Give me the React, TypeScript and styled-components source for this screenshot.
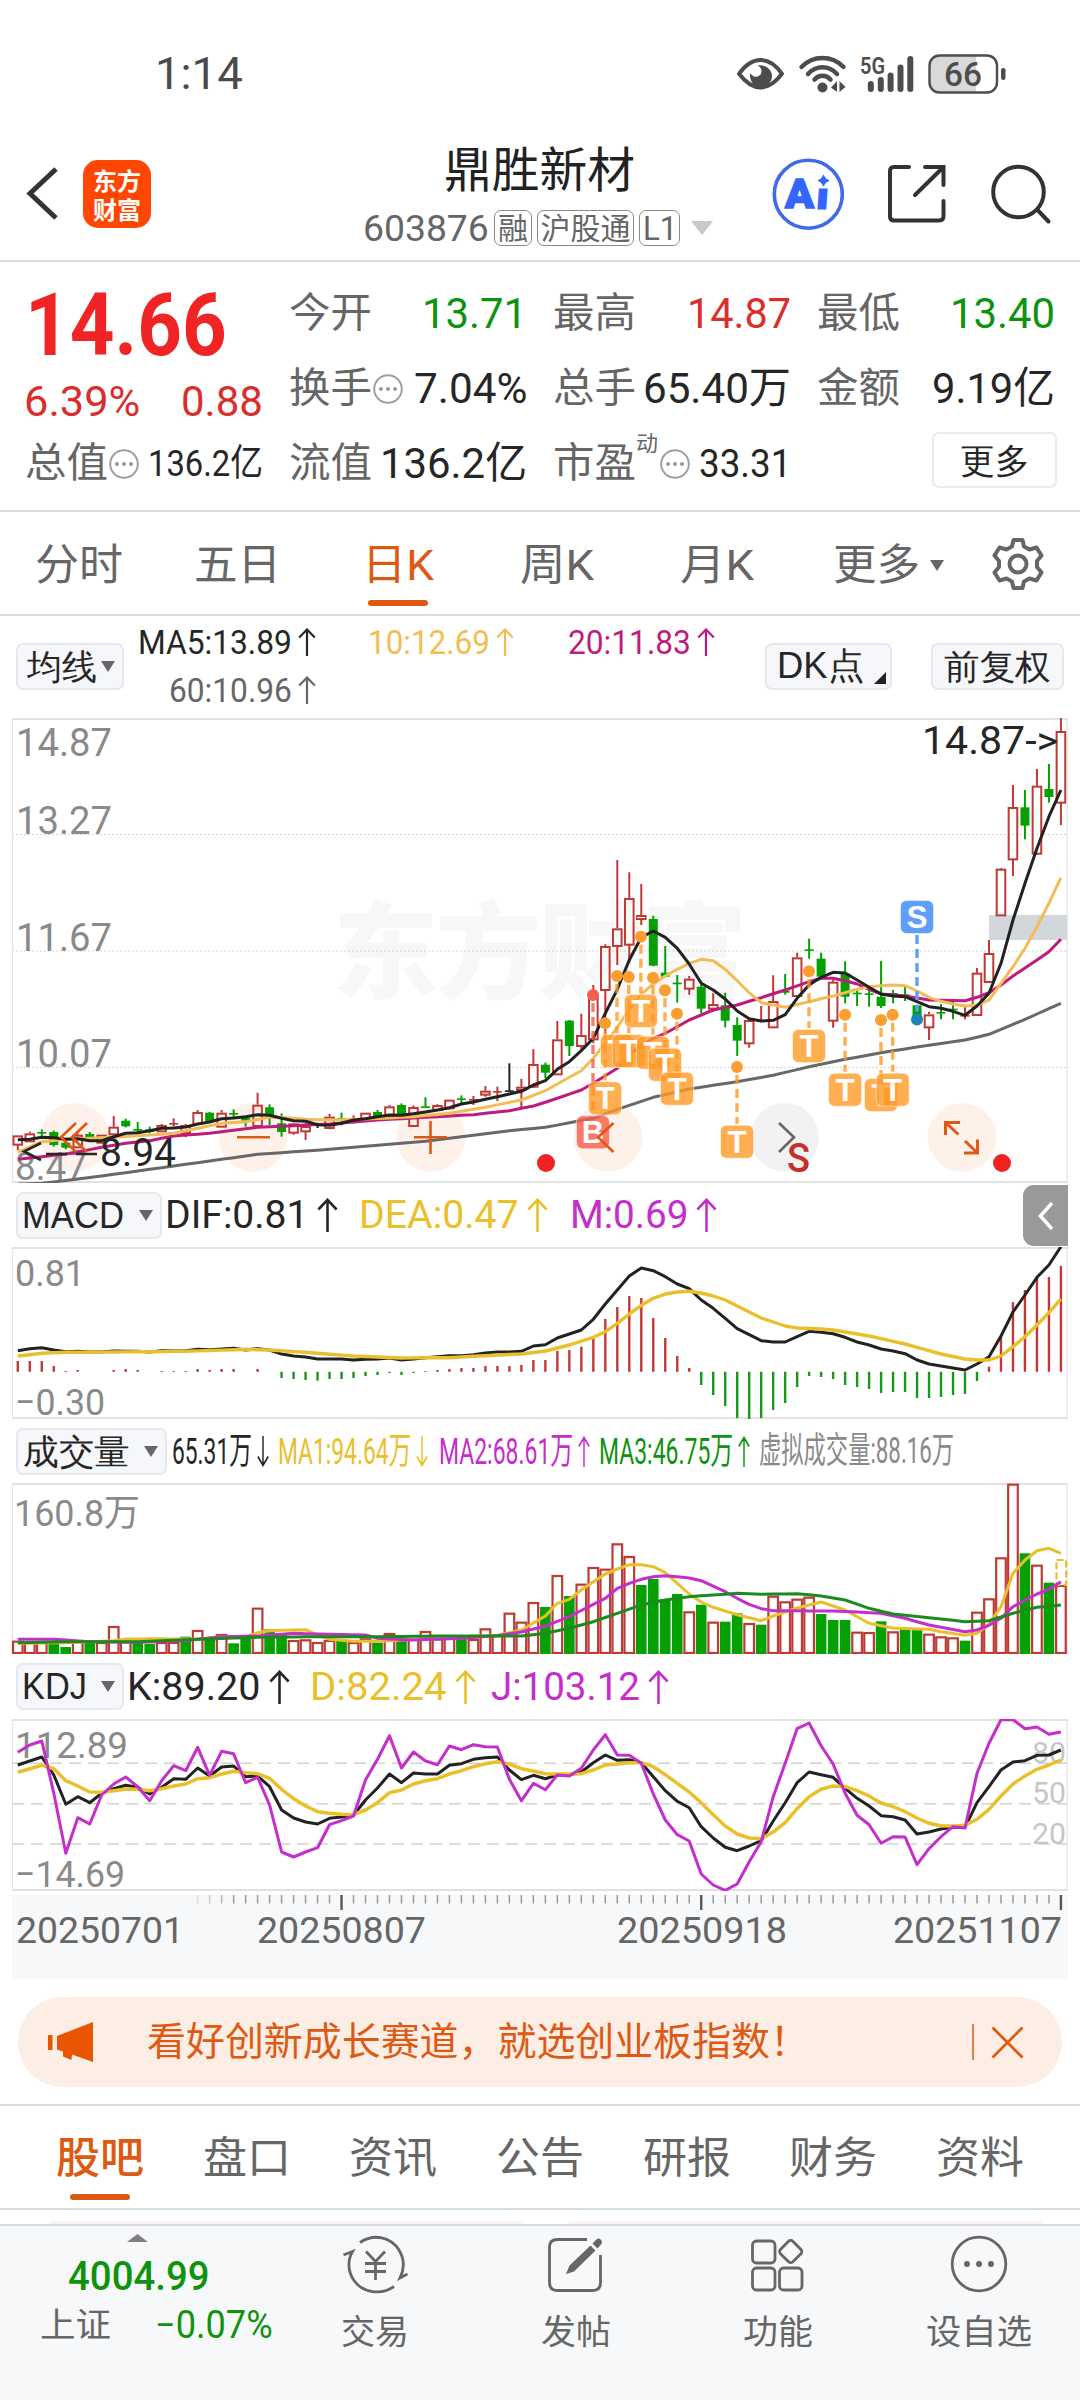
import React, { useLayoutEffect, useRef, useState } from "react";
import styled, { createGlobalStyle } from "styled-components";

const FONT = `Roboto, "Noto Sans CJK SC", sans-serif`;
const C = {
  ink: "#262626",
  grey: "#666666",
  light: "#8a8a8a",
  red: "#d82f2c",
  candle: "#bd3a36",
  green: "#0f930f",
  bar: "#04a004",
  orange: "#dc5a14",
  yellow: "#e9c02c",
  amber: "#f2bd55",
  magenta: "#bf1b7d",
  purple: "#c42fcb",
  line: "#dcdcdc",
};

const Global = createGlobalStyle`
  * { box-sizing: border-box; }
  html, body { margin: 0; padding: 0; background: #fff; }
  body { width: 1080px; font-family: ${FONT}; overflow-x: hidden; }
  svg { display: block; flex: none; }
`;

/* ---------- text that is condensed or widened to a fixed measure ---------- */

const FitBox = styled.span<{ $w: number; $size: number; $color: string; $weight: number; $ml: number }>`
  display: block;
  flex: none;
  width: ${(p) => p.$w}px;
  height: ${(p) => Math.round(p.$size * 1.1)}px;
  line-height: ${(p) => Math.round(p.$size * 1.1)}px;
  margin-left: ${(p) => p.$ml}px;
  font-size: ${(p) => p.$size}px;
  font-weight: ${(p) => p.$weight};
  color: ${(p) => p.$color};
  white-space: nowrap;
`;
const FitInner = styled.span`
  display: inline-block;
  transform-origin: 0 50%;
  white-space: pre;
`;

type FitProps = { w: number; size: number; color?: string; weight?: number; ml?: number; children: string };
function Fit({ w, size, color = C.ink, weight = 400, ml = 0, children }: FitProps) {
  const ref = useRef<HTMLSpanElement>(null);
  const [scale, setScale] = useState(1);
  useLayoutEffect(() => {
    if (ref.current) setScale(w / ref.current.offsetWidth);
  }, [w, size, children]);
  return (
    <FitBox $w={w} $size={size} $color={color} $weight={weight} $ml={ml}>
      <FitInner ref={ref} style={{ transform: `scaleX(${scale})` }}>{children}</FitInner>
    </FitBox>
  );
}

/* ---------- layout parts ---------- */

const Page = styled.div`
  width: 1080px;
  height: 2400px;
  display: flex;
  flex-direction: column;
  background: #fff;
  overflow: hidden;
`;
const Row = styled.div<{ $gap?: number; $ml?: number; $mr?: number; $mt?: number }>`
  display: flex;
  align-items: center;
  gap: ${(p) => p.$gap ?? 0}px;
  margin: ${(p) => p.$mt ?? 0}px ${(p) => p.$mr ?? 0}px 0 ${(p) => p.$ml ?? 0}px;
`;
const StatusBar = styled.div`
  flex: none;
  height: 127px;
  padding: 20px 74px 0 155px;
  display: flex;
  align-items: center;
  justify-content: space-between;
`;
const Header = styled.header`
  flex: none;
  height: 135px;
  border-bottom: 2px solid ${C.line};
  display: grid;
  grid-template-columns: 151px 1fr 308px;
  align-items: center;
`;
const HeaderLeft = styled.div`
  display: flex;
  align-items: center;
  gap: 24px;
  padding-left: 26px;
  padding-top: 1px;
`;
const Logo = styled.div`
  width: 68px;
  height: 68px;
  border-radius: 15px;
  background: #ff4602;
  color: #fff;
  font: 700 24px/29px "Noto Sans CJK SC", sans-serif;
  display: flex;
  flex-direction: column;
  align-items: center;
  justify-content: center;
`;
const TitleBlock = styled.div`
  display: flex;
  flex-direction: column;
  padding-top: 3px;
  gap: 13px;
`;
const TitleLine = styled.div`
  height: 53px;
  padding-left: 293px;
`;
const CodeLine = styled.div`
  height: 36px;
  padding-left: 212px;
  display: flex;
  align-items: center;
`;
const Tag = styled.span<{ $w: number; $ml: number }>`
  flex: none;
  width: ${(p) => p.$w}px;
  height: 36px;
  margin-left: ${(p) => p.$ml}px;
  border: 1.5px solid #8a8a8a;
  border-radius: 7px;
  display: flex;
  align-items: center;
  justify-content: center;
`;
const HeaderRight = styled.div`
  display: flex;
  align-items: center;
`;

const Quote = styled.section`
  flex: none;
  height: 250px;
  padding: 13px 25px 0;
  border-bottom: 2px solid ${C.line};
  display: grid;
  grid-template-columns: repeat(4, 238px);
  column-gap: 26px;
  align-content: start;
`;
const QuoteCol = styled.div`
  display: flex;
  flex-direction: column;
`;
const Cell = styled.div<{ $h?: number; $pt?: number }>`
  height: ${(p) => p.$h ?? 75}px;
  padding-top: ${(p) => p.$pt ?? 2}px;
  display: flex;
  align-items: center;
  justify-content: space-between;
`;
const MoreButton = styled.button`
  width: 125px;
  height: 56px;
  margin: -7px -2px 0 auto;
  padding: 0;
  border: 2px solid #ebebeb;
  border-radius: 7px;
  background: #fff;
  display: flex;
  align-items: center;
  justify-content: center;
`;
const Sup = styled.span`
  align-self: flex-start;
  margin: -9px 2px 0 0;
`;

const PeriodTabs = styled.nav`
  flex: none;
  height: 104px;
  border-bottom: 2px solid ${C.line};
  display: grid;
  grid-template-columns: 158px 158px 163px 156px 163px 182px 1fr;
`;
const PeriodTab = styled.div<{ $active?: boolean; $pt?: number; $pr?: number }>`
  display: flex;
  align-items: center;
  justify-content: center;
  gap: 10px;
  padding-top: ${(p) => p.$pt ?? 4}px;
  padding-right: ${(p) => p.$pr ?? 0}px;
  position: relative;
  &::after {
    content: "";
    display: ${(p) => (p.$active ? "block" : "none")};
    position: absolute;
    bottom: 8px;
    width: 60px;
    height: 6px;
    border-radius: 3px;
    background: ${C.orange};
  }
`;

const Legend = styled.div<{ $h: number; $pt?: number; $pb?: number }>`
  flex: none;
  height: ${(p) => p.$h}px;
  padding: ${(p) => p.$pt ?? 0}px 0 ${(p) => p.$pb ?? 0}px 16px;
  display: flex;
  align-items: center;
  position: relative;
`;
const Chip = styled.button<{ $w: number; $ml?: number; $pl?: number; $pr?: number }>`
  flex: none;
  width: ${(p) => p.$w}px;
  height: 47px;
  margin: 0 0 0 ${(p) => p.$ml ?? 0}px;
  padding: 0 ${(p) => p.$pr ?? 7}px 0 ${(p) => p.$pl ?? 9}px;
  border: 2px solid #e6e8ec;
  border-radius: 7px;
  background: #f6f7fa;
  display: flex;
  align-items: center;
  justify-content: space-between;
`;
const Corner = styled.span`
  align-self: flex-end;
  margin-bottom: 4px;
`;
const MaGrid = styled.div`
  display: grid;
  grid-template-columns: 192px 198px 201px;
  grid-auto-rows: 48px;
  align-items: center;
  justify-items: end;
`;
const SideHandle = styled.div`
  position: absolute;
  right: 12px;
  top: 2px;
  width: 45px;
  height: 61px;
  border-radius: 11px 0 0 11px;
  background: #999;
  display: flex;
  align-items: center;
  justify-content: center;
`;

const Axis = styled.div`
  flex: none;
  height: 84px;
  margin: 4px 12px 0;
  background: #f7f8fa;
`;
const Banner = styled.div`
  flex: none;
  height: 90px;
  margin: 18px 18px 17px;
  padding: 0 16px 0 30px;
  border-radius: 45px;
  background: #fceee5;
  display: flex;
  align-items: center;
`;
const Divider = styled.span`
  width: 2px;
  height: 36px;
  margin-left: auto;
  margin-right: 17px;
  background: ${C.orange};
  opacity: 0.75;
`;
const SectionTabs = styled.nav`
  flex: none;
  height: 106px;
  padding: 0 27px;
  border-top: 2px solid ${C.line};
  border-bottom: 2px solid ${C.line};
  display: grid;
  grid-template-columns: repeat(7, 1fr);
`;
const Strips = styled.div`
  flex: none;
  height: 14px;
  padding: 11px 38px 0 50px;
  display: flex;
  justify-content: space-between;
`;
const Strip = styled.span`
  width: 474px;
  height: 3px;
  border-radius: 3px 3px 0 0;
  background: #fdf3ef;
`;
const BottomNav = styled.footer`
  flex: none;
  height: 176px;
  border-top: 2px solid #d8dbe2;
  background: #f7f8fa;
  display: grid;
  grid-template-columns: 275px 200px 202px 201px 202px;
`;
const IndexBox = styled.div`
  padding: 8px 0 0 40px;
  display: flex;
  flex-direction: column;
`;
const NavItem = styled.div`
  display: flex;
  flex-direction: column;
  align-items: center;
  padding-top: 8px;
  gap: 20px;
`;

/* ---------- icons ---------- */

const Tri = ({ w = 14, h = 11, color = C.grey, up = false }: { w?: number; h?: number; color?: string; up?: boolean }) => (
  <svg width={w} height={h} viewBox="0 0 14 11" preserveAspectRatio="none">
    <path d={up ? "M0 11H14L7 0Z" : "M0 0H14L7 11Z"} fill={color} />
  </svg>
);
const ArrowSvg = styled.svg<{ $ml: number }>`
  margin-left: ${(p) => p.$ml}px;
`;
const Arrow = ({ color, down = false, w = 18, h = 28, ml = 7 }: { color: string; down?: boolean; w?: number; h?: number; ml?: number }) => (
  <ArrowSvg $ml={ml} width={w} height={h} viewBox="0 0 18 28" preserveAspectRatio="none">
    <path
      d={down ? "M9 0V26.5M1.2 18.5L9 26.5L16.8 18.5" : "M9 28V1.5M1.2 9.5L9 1.5L16.8 9.5"}
      fill="none" stroke={color} strokeWidth="2.2"
    />
  </ArrowSvg>
);
const Dots = () => (
  <svg width="30" height="30" viewBox="0 0 30 30">
    <circle cx="15" cy="15" r="13.800" fill="none" stroke="#a0a0a0" strokeWidth="2" />
    <g fill="#999"><circle cx="8" cy="15" r="2" /><circle cx="15" cy="15" r="2" /><circle cx="22" cy="15" r="2" /></g>
  </svg>
);

const StatusIcons = () => (
  <svg width="271" height="40" viewBox="735 53 271 40">
    <g fill="none" stroke="#4d4d4d" strokeWidth="4" strokeLinecap="round" strokeLinejoin="round">
      <path d="M739 72.800C746 63 753 59 760.500 59C768 59 775 63 782 72.800C775 82 768 86.500 760.500 86.500C753 86.500 746 82 739 72.800Z" />
      <path d="M801.500 66C813 54 832 54 843.500 66M808 73C816 64 829 64 837 73M814.500 78.500C819 73.500 826 73.500 830.500 78.500" strokeWidth="4.500" />
    </g>
    <g fill="#4d4d4d">
      <path d="M757.500 64.500C766 63 772 69 772 75C772 82 766 86 760.500 86C754 86 749.500 81 750 72C752.500 76 757 77 760 74C763 71 761.500 66 757.500 64.500Z" />
      <circle cx="822.5" cy="86.500" r="5" />
      <path d="M837 80V91L831 86.500ZM839.500 80L845.500 86L839.500 91Z" />
      <rect x="867.800" y="80" width="6" height="11" rx="3" />
      <rect x="877.800" y="76" width="6" height="15" rx="3" />
      <rect x="887.600" y="71.500" width="6" height="19.500" rx="3" />
      <rect x="897.500" y="63.500" width="6" height="27.500" rx="3" />
      <rect x="907.300" y="55" width="6" height="36" rx="3" />
      <rect x="1001" y="67" width="4.500" height="12" rx="2.200" />
    </g>
    <text x="860" y="72.500" fontSize="24" fontWeight="600" fill="#4d4d4d" textLength="25" lengthAdjust="spacingAndGlyphs" fontFamily={FONT}>5G</text>
    <path d="M939 55H976V91H939Q930 91 930 82V64Q930 55 939 55Z" fill="#d9d9d9" />
    <rect x="929.500" y="54.500" width="67.500" height="37" rx="10" fill="none" stroke="#4d4d4d" strokeWidth="2.400" />
    <text x="944" y="84.500" fontSize="33" fontWeight="500" fill="#4d4d4d" textLength="38" lengthAdjust="spacingAndGlyphs" fontFamily={FONT}>66</text>
  </svg>
);
const BackIcon = () => (
  <svg width="33" height="56" viewBox="26 167 33 56">
    <path d="M56 170L30 194.500L56 219" fill="none" stroke="#333" strokeWidth="5" />
  </svg>
);
const AiIcon = () => (
  <svg width="72" height="74" viewBox="772 157 72 74">
    <circle cx="808.300" cy="194.200" r="34" fill="none" stroke="#4169e8" strokeWidth="3.600" />
    <text x="785" y="207.500" fontSize="41" fontWeight="900" fill="#3566fb" stroke="#3566fb" strokeWidth="1.500" textLength="29" lengthAdjust="spacingAndGlyphs" fontFamily={FONT}>A</text>
    <text x="816" y="209" fontSize="38" fontWeight="900" fill="#3566fb" stroke="#3566fb" strokeWidth="1" textLength="13" lengthAdjust="spacingAndGlyphs" fontFamily={FONT} transform="skewX(-4) translate(14 0)">ı</text>
    <path d="M823.500 174.500L826 178.500L829.700 180.500L826 182.700L823.500 186.500L821 182.700L817.300 180.500L821 178.500Z" fill="#3566fb" />
  </svg>
);
const HeaderSvg = styled.svg`
  margin-left: 43px;
`;
const ShareIcon = () => (
  <HeaderSvg width="60" height="60" viewBox="887 165 60 60">
    <path d="M909 168H894Q890 168 890 172V217.500Q890 221.500 894 221.500H939Q943.500 221.500 943.500 217V202M925 168H943.500V186M942 169.500L915 196" fill="none" stroke="#333" strokeWidth="4" strokeLinecap="round" />
  </HeaderSvg>
);
const SearchIcon = () => (
  <HeaderSvg width="62" height="62" viewBox="990 163 62 62">
    <circle cx="1018.500" cy="192" r="25.300" fill="none" stroke="#333" strokeWidth="4" />
    <path d="M1038 210.500L1048.500 221.500" stroke="#333" strokeWidth="4" strokeLinecap="round" />
  </HeaderSvg>
);
const GearIcon = () => (
  <svg width="52" height="52" viewBox="0 0 52 52">
    <path d="M21.500 2H30.500L32 8.500L37.500 11.500L44.500 9.500L49.500 17.500L45 23V29L49.500 34.500L44.500 42.500L37.500 40.500L32 43.500L30.500 50H21.500L20 43.500L14.500 40.500L7.500 42.500L2.500 34.500L7 29V23L2.500 17.500L7.500 9.500L14.500 11.500L20 8.500Z" fill="none" stroke={C.grey} strokeWidth="4" strokeLinejoin="round" />
    <circle cx="26" cy="26" r="8.500" fill="none" stroke={C.grey} strokeWidth="4" />
  </svg>
);
const HornIcon = () => (
  <svg width="46" height="40" viewBox="0 0 46 40">
    <path d="M0 13H4.500V28H0ZM9 14L45 0V40L24 32.500L23.500 38L15 34.500V29.500L9 27.500Z" fill="#ea5504" />
  </svg>
);
const CloseIcon = () => (
  <svg width="33" height="33" viewBox="0 0 33 33">
    <path d="M1.500 1.500L31.500 31.500M31.500 1.500L1.500 31.500" stroke={C.orange} strokeWidth="2.800" />
  </svg>
);
const TradeIcon = () => (
  <svg width="66" height="60" viewBox="342 2233 66 60">
    <g fill="none" stroke={C.grey} strokeWidth="2.800">
      <path d="M360 2241.500C374 2232 391 2236 399 2249C405 2259 404 2269 400 2277L407.500 2273M394 2285.500C381 2294.500 363 2292 354 2279.500C347.500 2270 347.500 2259 352.500 2250.500L343.500 2254" />
      <path d="M366 2250.500L375.500 2260.500L385 2250.500M375.500 2260.500V2279M365 2262.500H386M365 2270.500H386" />
    </g>
  </svg>
);
const PostIcon = () => (
  <svg width="58" height="60" viewBox="549 2233 58 60">
    <path d="M589 2238.500H559.500Q551.500 2238.500 551.500 2246V2281.500Q551.500 2289.500 559.500 2289.500H594.500Q602.500 2289.500 602.500 2281.500V2254" fill="none" stroke={C.grey} strokeWidth="2.800" />
    <path d="M568 2273L571.500 2264.500L592.500 2244.500L597.500 2249.500L576 2270.500ZM594.500 2242.500L598.500 2238.500Q601 2236.500 603 2239Q605 2241 603 2243.500L599.500 2247.500Z" fill={C.grey} />
  </svg>
);
const AppsIcon = () => (
  <svg width="56" height="60" viewBox="751 2233 56 60">
    <g fill="none" stroke={C.grey} strokeWidth="2.800">
      <rect x="753.500" y="2240" width="22.500" height="22" rx="4" />
      <rect x="753.500" y="2267" width="22.500" height="22" rx="4" />
      <rect x="780.500" y="2267" width="22.500" height="22" rx="4" />
      <rect x="783" y="2241.800" width="17.500" height="17.500" rx="3" transform="rotate(45 791.700 2250.500)" />
    </g>
  </svg>
);
const MoreIcon = () => (
  <svg width="58" height="60" viewBox="950 2234 58 60">
    <circle cx="979" cy="2264" r="26.800" fill="none" stroke={C.grey} strokeWidth="2.800" />
    <g fill={C.grey}><circle cx="967" cy="2264" r="3" /><circle cx="979" cy="2264" r="3" /><circle cx="991" cy="2264" r="3" /></g>
  </svg>
);

/* ---------- charts: series are held in thirds of a pixel ---------- */

const X = (i: number) => 17.8 + i * 11.99;
const pts = (vals: number[], off: number) => vals.map((v, i) => `${X(i).toFixed(1)},${((v - off) / 3).toFixed(1)}`).join(" ");

/* fills the days between two known points of a sparse series */
const dense = (pairs: [number, number][]) => {
  const out: number[] = [];
  for (let k = 0; k < pairs.length - 1; k++) {
    const [i0, v0] = pairs[k];
    const [i1, v1] = pairs[k + 1];
    for (let i = i0; i < i1; i++) out.push(v0 + ((v1 - v0) * (i - i0)) / (i1 - i0));
  }
  out.push(pairs[pairs.length - 1][1]);
  return out;
};

const Line = ({ vals, off, color, w = 3 }: { vals: number[]; off: number; color: string; w?: number }) => (
  <polyline points={pts(vals, off)} fill="none" stroke={color} strokeWidth={w} strokeLinejoin="round" />
);
const Frame = ({ h }: { h: number }) => (
  <>
    <path d={`M12 1H1068M12 ${h - 1}H1068`} stroke="#e2e2e2" strokeWidth="2" />
    <path d={`M12.500 0V${h}M1067.200 0V${h}`} stroke="#e4e4e4" strokeWidth="1.200" />
  </>
);
const Label = ({ x, y, w, children, color = C.light, size = 39 }: { x: number; y: number; w: number; children: string; color?: string; size?: number }) => (
  <text x={x} y={y} textLength={w} lengthAdjust="spacingAndGlyphs" fontSize={size} fill={color} fontFamily={FONT}>{children}</text>
);

/* type, body top, body bottom, high, low */
type Candle = [string, number, number, number, number];
const candles: Candle[] = [
  ["r", 1306, 1334, 1306, 1350], ["r", 1300, 1324, 1295, 1324], ["g", 1296, 1300, 1288, 1308], ["g", 1296, 1335, 1292, 1340],
  ["g", 1328, 1343, 1318, 1348], ["r", 1304, 1342, 1300, 1342], ["g", 1302, 1316, 1296, 1318], ["r", 1304, 1328, 1304, 1330],
  ["r", 1280, 1303, 1248, 1303], ["g", 1262, 1279, 1256, 1282], ["g", 1287, 1292, 1266, 1296], ["g", 1288, 1296, 1280, 1300],
  ["r", 1275, 1294, 1272, 1296], ["r", 1269, 1274, 1255, 1280], ["r", 1275, 1299, 1272, 1312], ["r", 1236, 1272, 1230, 1272],
  ["g", 1238, 1266, 1236, 1268], ["r", 1238, 1280, 1230, 1280], ["g", 1239, 1243, 1228, 1252], ["g", 1253, 1262, 1250, 1280],
  ["r", 1214, 1278, 1178, 1282], ["g", 1222, 1246, 1213, 1275], ["g", 1270, 1296, 1240, 1310], ["r", 1270, 1298, 1268, 1304],
  ["r", 1278, 1294, 1270, 1320], ["k", 1273, 1277, 1268, 1284], ["r", 1250, 1284, 1242, 1288], ["g", 1254, 1258, 1238, 1276],
  ["r", 1255, 1259, 1246, 1270], ["r", 1238, 1256, 1238, 1256], ["g", 1236, 1250, 1230, 1252], ["r", 1219, 1248, 1215, 1248],
  ["g", 1215, 1246, 1210, 1248], ["r", 1221, 1278, 1216, 1278], ["g", 1219, 1223, 1192, 1223], ["r", 1215, 1230, 1213, 1232],
  ["r", 1199, 1225, 1199, 1225], ["g", 1195, 1199, 1186, 1210], ["r", 1197, 1201, 1188, 1215], ["r", 1172, 1184, 1158, 1190],
  ["r", 1173, 1177, 1160, 1203], ["k", 1171, 1175, 1090, 1175], ["r", 1160, 1170, 1136, 1224], ["r", 1092, 1160, 1048, 1164],
  ["g", 1094, 1118, 1088, 1135], ["r", 1018, 1123, 963, 1123], ["g", 962, 1038, 960, 1068], ["r", 1005, 1038, 941, 1050],
  ["r", 882, 1018, 855, 1030], ["r", 738, 870, 733, 1020], ["r", 685, 738, 480, 795], ["r", 594, 734, 517, 790],
  ["r", 645, 657, 552, 675], ["g", 657, 797, 647, 799], ["g", 818, 830, 738, 832], ["g", 848, 852, 825, 908],
  ["r", 836, 866, 828, 884], ["g", 860, 926, 845, 940], ["r", 912, 926, 880, 935], ["g", 916, 962, 878, 982],
  ["g", 975, 1022, 952, 1068], ["r", 960, 1030, 955, 1043], ["r", 961, 965, 918, 967], ["r", 903, 982, 826, 984],
  ["g", 872, 878, 822, 884], ["r", 772, 888, 758, 890], ["g", 748, 752, 716, 776], ["g", 776, 830, 758, 832],
  ["r", 845, 962, 838, 983], ["g", 820, 890, 784, 910], ["g", 878, 882, 870, 918], ["g", 880, 884, 872, 920],
  ["g", 890, 918, 783, 924], ["g", 879, 883, 870, 910], ["g", 883, 887, 855, 903], ["g", 916, 960, 914, 975],
  ["r", 943, 982, 935, 1020], ["g", 936, 940, 912, 958], ["g", 926, 930, 905, 958], ["r", 944, 950, 915, 958],
  ["r", 818, 945, 804, 948], ["r", 759, 846, 720, 848], ["r", 506, 646, 504, 648], ["r", 321, 478, 255, 528],
  ["g", 322, 377, 270, 418], ["r", 257, 461, 207, 465], ["g", 267, 291, 192, 308], ["r", 93, 308, 54, 375],
];
const ma5 = [1319, 1318, 1312, 1313, 1318, 1316, 1322, 1322, 1310, 1300, 1298, 1292, 1285, 1284, 1281, 1272, 1266, 1256, 1254, 1250, 1244, 1246, 1255, 1262, 1264, 1274, 1276, 1270, 1260, 1256, 1250, 1245, 1246, 1241, 1236, 1230, 1223, 1212, 1206, 1198, 1190, 1182, 1174, 1155, 1142, 1108, 1085, 1052, 1015, 940, 868, 780, 712, 693, 712, 745, 792, 850, 870, 897, 933, 956, 963, 961, 944, 895, 855, 832, 817, 819, 840, 862, 882, 888, 890, 905, 920, 925, 934, 946, 918, 880, 790, 660, 550, 445, 350, 270];
const ma10 = dense([[0, 1356], [2, 1325], [4, 1318], [8, 1312], [11, 1305], [13, 1300], [15, 1285], [17, 1270], [19, 1265], [21, 1252], [22, 1252], [24, 1258], [26, 1260], [28, 1258], [31, 1254], [33, 1250], [36, 1240], [39, 1222], [42, 1200], [44, 1172], [47, 1112], [48, 1075], [49, 1030], [50, 982], [51, 928], [52, 882], [53, 852], [54, 828], [55, 808], [56, 790], [57, 778], [58, 782], [59, 808], [60, 842], [61, 878], [62, 908], [64, 922], [66, 905], [68, 888], [70, 868], [71, 860], [73, 855], [74, 857], [75, 873], [76, 892], [77, 904], [78, 912], [79, 918], [80, 915], [81, 900], [82, 850], [83, 800], [84, 745], [85, 680], [86, 610], [87, 533]]);
const ma20 = dense([[0, 1378], [4, 1362], [7, 1342], [9, 1330], [11, 1322], [13, 1308], [16, 1300], [20, 1282], [23, 1277], [26, 1272], [30, 1260], [34, 1252], [38, 1244], [41, 1232], [43, 1218], [45, 1195], [47, 1170], [48, 1150], [50, 1105], [51, 1065], [52, 1035], [53, 1015], [54, 1000], [56, 960], [58, 930], [60, 915], [62, 893], [64, 870], [66, 845], [67, 835], [68, 835], [69, 842], [70, 852], [71, 868], [72, 882], [74, 888], [76, 900], [79, 902], [80, 892], [81, 878], [82, 855], [83, 828], [85, 780], [86, 755], [87, 718]]);
const ma60 = dense([[0, 1452], [2, 1450], [7, 1428], [13, 1398], [20, 1363], [26, 1348], [34, 1324], [41, 1292], [44, 1282], [48, 1255], [50, 1228], [53, 1192], [56, 1167], [60, 1145], [63, 1126], [66, 1100], [69, 1078], [73, 1052], [79, 1020], [81, 1003], [84, 958], [87, 910]]);

/* marker centre x, box centre y, dot centre y */
const tMarks: [number, number, number][] = [
  [605.1, 380.3, 305.3], [617, 333, 258], [628.8, 333, 259], [653, 334.7, 259.7], [665, 346.7, 272.3], [677, 370.7, 295.7],
  [640.9, 293, 218.7], [737, 423.7, 349], [809, 328, 253.3], [881, 377, 302], [892.7, 371.7, 296.7], [845.1, 371.7, 296.7],
];

const Marker = ({ x, box, dot, t, fill, dotFill }: { x: number; box: number; dot: number; t: string; fill: string; dotFill: string }) => {
  const start = box > dot ? dot + 8 : box + 18;
  const end = box > dot ? box - 18 : dot - 8;
  return (
    <g>
      <path d={`M${x} ${start}V${end}`} stroke={fill} strokeWidth="3.4" strokeDasharray="9 5" />
      <circle cx={x} cy={dot} r="6" fill={dotFill} />
      <rect x={x - 16.5} y={box - 16.5} width="33" height="33" rx="6" fill={fill} stroke="#fff" strokeOpacity=".5" strokeWidth="1" />
      <text x={x} y={box + 11} textAnchor="middle" fontSize="31" fontWeight="700" fill="#fff" fontFamily={`"Liberation Sans", sans-serif`}>{t}</text>
    </g>
  );
};

const KChart = () => (
  <svg width="1080" height="465" viewBox="0 0 1080 465">
    <text x="333" y="272" fontSize="105" fontWeight="900" fill="#f7f7f7" textLength="414" fontFamily={`"Noto Sans CJK SC", sans-serif`}>东方财富</text>
    <path d="M12 116.500H1067M12 233H1067M12 349.500H1067" stroke="#d4d4d4" strokeWidth="1.200" strokeDasharray="2 2" />
    <Frame h={465} />
    <g>
      {[74.8, 253, 430.7, 608, 962].map((x) => <circle key={x} cx={x} cy="419.300" r="34.400" fill="#fef1ea" />)}
      <circle cx="784.500" cy="419.300" r="34.400" fill="#f2f2f2" />
    </g>
    <rect x="989" y="197" width="78" height="25" fill="#d3d6db" />
    <Label x={16} y={38} w={96}>14.87</Label>
    <Label x={16} y={116} w={96}>13.27</Label>
    <Label x={16} y={233} w={96}>11.67</Label>
    <Label x={16} y={349} w={96}>10.07</Label>
    <Label x={15} y={462} w={72}>8.47</Label>
    {candles.map(([t, top, bot, hi, lo], i) => {
      const x = X(i);
      const y = (v: number) => (v - 54) / 3;
      const col = t === "r" ? C.candle : t === "g" ? C.bar : "#222";
      const hollow = t === "r" && bot - top > 8;
      return (
        <g key={i} stroke={col} strokeWidth="2">
          <path d={hollow ? `M${x} ${y(hi)}V${y(top)}M${x} ${y(bot)}V${y(lo)}` : `M${x} ${y(hi)}V${y(lo)}`} />
          {hollow
            ? <rect x={x - 4.3} y={y(top) + 1} width="8.600" height={Math.max(1, (bot - top) / 3 - 1)} fill="none" />
            : <rect x={x - 4.5} y={y(top)} width="9" height={Math.max(1.6, (bot - top) / 3)} fill={col} stroke="none" />}
        </g>
      );
    })}
    <Line vals={ma60} off={54} color="#686868" />
    <Line vals={ma20} off={54} color={C.magenta} />
    <Line vals={ma10} off={54} color={C.amber} />
    <Line vals={ma5} off={54} color="#222" />
    <path d="M41 425L24 433.500L41 442M46 436H67M76 436H97" fill="none" stroke="#262626" strokeWidth="2.600" />
    <Label x={100} y={448} w={76} color={C.ink}>8.94</Label>
    <Label x={922} y={36} w={136} color={C.ink}>{"14.87->"}</Label>
    <Marker x={593} box={414.3} dot={277} t="B" fill="rgba(247,92,72,.8)" dotFill="#f4604c" />
    {tMarks.map(([x, b, d], i) => <Marker key={i} x={x} box={b} dot={d} t="T" fill="rgba(255,154,38,.8)" dotFill="#fb9d31" />)}
    <Marker x={917} box={199} dot={301.5} t="S" fill="#5f9ffb" dotFill="#1a86b8" />
    <g fill="none" stroke={C.orange} strokeWidth="2.600">
      <path d="M76 405L61 419.300L76 434M87 405L72 419.300L87 434M237 419.300H270M414 419.300H447M430.500 403V436M613.500 405L598 419.300L613.500 434" />
      <path d="M945.500 417V404.500H960M946 405L958.500 416.500M964 435H977.500V421.500M977 434.500L965 423" strokeWidth="3" />
    </g>
    <path d="M779 405L794 419.300L779 434" fill="none" stroke="#666" strokeWidth="2.600" />
    <circle cx="546" cy="445" r="9" fill="#f02222" />
    <circle cx="1002" cy="445" r="9" fill="#f02222" />
    <text x="787" y="453.500" fontSize="41" fill="#c4302c" fontFamily={FONT} fontWeight="500" textLength="23" lengthAdjust="spacingAndGlyphs">S</text>
  </svg>
);

const dif = [512, 506, 503, 510, 515, 514, 516, 516, 513, 514, 514, 516, 512, 513, 512, 508, 509, 507, 505, 510, 506, 510, 522, 528, 531, 537, 537, 537, 540, 538, 537, 534, 540, 537, 533, 530, 527, 527, 524, 519, 516, 516, 514, 498, 494, 474, 462, 450, 418, 372, 330, 288, 264, 272, 290, 312, 326, 360, 385, 415, 446, 464, 482, 486, 486, 470, 454, 457, 461, 472, 486, 495, 507, 513, 521, 540, 552, 558, 564, 570, 552, 530, 468, 396, 345, 292, 255, 200];
const dea = dense([[0, 528], [2, 520], [4, 517], [8, 516], [14, 514], [19, 508], [21, 510], [24, 517], [28, 528], [32, 534], [36, 533], [40, 525], [42, 522], [44, 513], [46, 495], [48, 472], [49, 455], [50, 430], [51, 402], [52, 376], [53, 355], [54, 342], [55, 336], [56, 334], [57, 339], [58, 348], [59, 360], [60, 378], [61, 396], [62, 414], [64, 438], [65, 444], [67, 447], [68, 450], [71, 468], [74, 492], [77, 522], [79, 537], [80, 540], [81, 540], [82, 528], [83, 500], [84, 470], [85, 435], [86, 398], [87, 357]]);
const hist: (number | null)[] = [543, 543, 543, 558, 573, 570, null, null, 570, 567, 570, null, 573, 573, 573, 567, 570, 567, 567, null, 567, null, 594, 597, 600, 602, 597, 597, 594, 588, 585, 579, 585, 579, 573, 570, 567, 564, 564, 558, 558, 558, 555, 540, 540, 513, 510, 500, 470, 417, 381, 348, 354, 414, 474, 528, 564, 615, 645, 678, 714, 717, 714, 690, 669, 621, 588, 591, 597, 615, 621, 627, 639, 636, 636, 654, 654, 651, 645, 642, 603, 560, 470, 366, 330, 290, 291, 258];

const MacdChart = () => (
  <svg width="1080" height="172" viewBox="0 0 1080 172">
    <Frame h={172} />
    <Label x={15} y={39} w={70} size={37}>0.81</Label>
    <Label x={15} y={168} w={90} size={37}>−0.30</Label>
    {hist.map((v, i) => v !== null && <path key={i} d={`M${X(i)} 124.800V${(v - 201) / 3}`} stroke={v < 576 ? C.candle : "#17991a"} strokeWidth="2.400" />)}
    <Line vals={dif} off={201} color="#222" />
    <Line vals={dea} off={201} color={C.yellow} w={3.4} />
  </svg>
);

const vol = "r512 r516 r516 g518 g531 r510 g518 r516 r468 r512 g516 g522 r516 r516 g500 r480 g506 r492 g520 g505 r413 g478 g495 r510 r508 r516 r510 g508 r516 r505 g518 r489 g512 r505 r483 r505 r500 g498 r507 r475 r495 r428 r455 r396 g411 r315 g378 r341 r291 r296 r220 r258 g345 g327 g387 g372 r424 g404 r455 g455 g430 r459 g464 r377 r394 r386 r380 g432 g450 g450 r485 r486 g454 r484 g477 g477 r491 r499 r502 g512 r425 r385 r262 r41 g250 r284 g338 r345"
  .split(" ").map((s) => ({ up: s[0] === "r", v: Number(s.slice(1)) }));
const v5 = dense([[0, 520], [4, 518], [8, 512], [9, 507], [12, 506], [15, 508], [17, 500], [19, 500], [20, 488], [21, 482], [24, 479], [25, 495], [26, 508], [28, 514], [30, 514], [33, 508], [36, 502], [40, 496], [42, 480], [44, 438], [45, 400], [46, 388], [47, 360], [48, 335], [49, 312], [50, 297], [51, 284], [52, 284], [53, 290], [54, 308], [55, 340], [56, 372], [57, 396], [58, 412], [60, 434], [62, 452], [63, 438], [65, 414], [67, 396], [69, 420], [70, 440], [71, 460], [73, 474], [76, 478], [77, 485], [79, 496], [80, 490], [81, 462], [82, 410], [83, 310], [84, 270], [85, 242], [86, 235], [87, 250]]);
const v10 = dense([[0, 508], [3, 508], [6, 515], [10, 517], [14, 512], [17, 500], [20, 498], [23, 490], [26, 493], [29, 495], [30, 505], [33, 510], [37, 505], [40, 497], [42, 486], [44, 468], [46, 440], [48, 403], [49, 385], [50, 355], [51, 340], [52, 328], [53, 320], [54, 317], [56, 324], [57, 332], [59, 365], [60, 385], [61, 403], [62, 416], [63, 422], [68, 423], [70, 426], [72, 430], [74, 445], [76, 465], [79, 485], [80, 480], [81, 466], [82, 445], [83, 410], [85, 372], [86, 358], [87, 335]]);
const v20 = dense([[0, 518], [4, 515], [10, 515], [15, 508], [20, 502], [25, 500], [30, 500], [36, 498], [42, 498], [44, 490], [46, 475], [48, 455], [50, 430], [52, 405], [54, 390], [56, 380], [58, 375], [60, 370], [62, 373], [65, 371], [67, 378], [69, 390], [71, 415], [73, 432], [76, 443], [79, 455], [81, 452], [83, 430], [85, 412], [87, 405]]);

const VolumeChart = () => (
  <svg width="1080" height="171" viewBox="0 0 1080 171">
    <Frame h={171} />
    <Label x={14} y={43} w={126} size={37}>160.8万</Label>
    {vol.map(({ up, v }, i) => {
      const top = (v - 39) / 3;
      return up
        ? <rect key={i} x={X(i) - 4.8} y={top + 1} width="9.600" height={169 - top} fill="none" stroke={C.candle} strokeWidth="2.200" />
        : <rect key={i} x={X(i) - 5.3} y={top} width="10.600" height={171 - top} fill={C.bar} />;
    })}
    <rect x="1056.500" y="77" width="9.600" height="25" fill="#fff" stroke={C.yellow} strokeWidth="2.200" strokeDasharray="7 3" />
    <Line vals={v5} off={39} color={C.yellow} />
    <Line vals={v10} off={39} color={C.purple} />
    <Line vals={v20} off={39} color="#1d8a1f" />
  </svg>
);

const kVals = [315, 303, 291, 345, 433, 410, 428, 400, 386, 376, 382, 402, 382, 356, 358, 324, 348, 321, 318, 350, 348, 380, 450, 474, 486, 492, 475, 471, 466, 420, 384, 342, 368, 339, 342, 342, 316, 311, 298, 293, 291, 330, 359, 346, 356, 345, 345, 336, 308, 285, 301, 299, 308, 350, 392, 424, 443, 500, 534, 562, 572, 558, 542, 483, 428, 368, 336, 344, 352, 385, 415, 438, 467, 470, 480, 522, 516, 507, 502, 502, 428, 380, 330, 306, 302, 286, 285, 270];
const dVals = [337, 326, 316, 326, 362, 378, 396, 397, 392, 387, 388, 392, 386, 378, 372, 356, 353, 342, 334, 338, 341, 355, 388, 416, 438, 455, 460, 463, 464, 450, 428, 398, 390, 372, 362, 356, 342, 332, 320, 311, 305, 312, 326, 333, 341, 342, 342, 341, 330, 315, 312, 308, 308, 320, 344, 370, 396, 428, 464, 498, 522, 534, 536, 516, 488, 446, 410, 388, 378, 380, 392, 408, 429, 440, 455, 474, 490, 497, 498, 496, 478, 448, 408, 372, 348, 328, 315, 300];
const jVals = [277, 255, 243, 400, 580, 473, 492, 405, 372, 351, 380, 422, 362, 317, 332, 262, 346, 274, 281, 368, 352, 435, 576, 591, 576, 563, 494, 482, 468, 360, 298, 227, 324, 276, 303, 314, 258, 269, 254, 260, 261, 358, 422, 370, 389, 345, 348, 325, 270, 224, 285, 286, 310, 402, 480, 524, 543, 642, 675, 691, 672, 605, 545, 410, 310, 206, 189, 257, 312, 400, 466, 494, 550, 530, 531, 614, 566, 530, 500, 504, 340, 250, 179, 179, 206, 201, 223, 216];

const KdjChart = () => (
  <svg width="1080" height="172" viewBox="0 0 1080 172">
    <Frame h={172} />
    <path d="M12 44.300H1067M12 84.700H1067M12 125H1067" stroke="#d2d2d2" strokeWidth="1.600" strokeDasharray="12 7" />
    <Label x={15} y={39} w={113} size={37}>112.89</Label>
    <Label x={15} y={168} w={110} size={37}>−14.69</Label>
    <Label x={1032} y={44} w={34} size={30} color="#c6c6c6">80</Label>
    <Label x={1032} y={84} w={34} size={30} color="#c6c6c6">50</Label>
    <Label x={1032} y={124.5} w={34} size={30} color="#c6c6c6">20</Label>
    <Line vals={kVals} off={177} color="#222" />
    <Line vals={dVals} off={177} color={C.yellow} w={3.5} />
    <Line vals={jVals} off={177} color={C.purple} w={3} />
  </svg>
);

const AxisChart = () => (
  <svg width="1056" height="84" viewBox="12 0 1056 84">
    {Array.from({ length: 73 }, (_, k) => k + 15).map((i) => {
      const major = i === 27 || i === 57 || i === 87;
      return <path key={i} d={`M${X(i)} 0V${major ? 15 : 8.5}`} stroke={major ? "#555" : "#999"} strokeWidth={major ? 2.4 : 1.5} opacity={i < 18 ? 0.3 + (i - 15) * 0.2 : 1} />;
    })}
    <Label x={16} y={48} w={168} size={37} color={C.grey}>20250701</Label>
    <Label x={257} y={48} w={169} size={37} color={C.grey}>20250807</Label>
    <Label x={617} y={48} w={170} size={37} color={C.grey}>20250918</Label>
    <Label x={893} y={48} w={169} size={37} color={C.grey}>20251107</Label>
  </svg>
);

/* ---------- sections ---------- */

const Val = ({ w, ml, color, down, size = 38, thin = false, children }: { w: number; ml?: number; color: string; down?: boolean; size?: number; thin?: boolean; children: string }) => (
  <Row>
    <Fit w={w} size={size} color={color} ml={ml}>{children}</Fit>
    <Arrow color={color} down={down} w={thin ? 12 : size > 34 ? 21 : 18} h={thin ? 31 : size > 34 ? 34 : 28} ml={thin ? 5 : size > 34 ? 8 : 6} />
  </Row>
);

const periods: [string, number][] = [["分时", 88], ["五日", 87], ["日K", 72], ["周K", 74], ["月K", 74]];
const sections = ["股吧", "盘口", "资讯", "公告", "研报", "财务", "资料"];

export default function App() {
  return (
    <Page>
      <Global />
      <StatusBar>
        <Fit w={88} size={45} color="#4a4a4a">1:14</Fit>
        <StatusIcons />
      </StatusBar>

      <Header>
        <HeaderLeft>
          <BackIcon />
          <Logo><span>东方</span><span>财富</span></Logo>
        </HeaderLeft>
        <TitleBlock>
          <TitleLine><Fit w={191} size={48} color="#222">鼎胜新材</Fit></TitleLine>
          <CodeLine>
            <Fit w={126} size={37} color={C.grey}>603876</Fit>
            <Tag $w={38} $ml={5}><Fit w={30} size={30} color={C.grey}>融</Fit></Tag>
            <Tag $w={97} $ml={5}><Fit w={90} size={30} color={C.grey}>沪股通</Fit></Tag>
            <Tag $w={41} $ml={5}><Fit w={34} size={34} color={C.grey}>L1</Fit></Tag>
            <Row $ml={11}><Tri w={22} h={14} color="#c8c8c8" /></Row>
          </CodeLine>
        </TitleBlock>
        <HeaderRight><AiIcon /><ShareIcon /><SearchIcon /></HeaderRight>
      </Header>

      <Quote>
        <QuoteCol>
          <Cell $h={100} $pt={0}><Fit w={202} size={87} color="#f02424" weight={700}>14.66</Fit></Cell>
          <Cell $h={50}>
            <Fit w={116} size={43} color={C.red} ml={-1}>6.39%</Fit>
            <Fit w={82} size={43} color={C.red}>0.88</Fit>
          </Cell>
          <Cell>
            <Row $gap={1}><Fit w={83} size={41} color={C.grey}>总值</Fit><Dots /></Row>
            <Fit w={115} size={37}>136.2亿</Fit>
          </Cell>
        </QuoteCol>
        <QuoteCol>
          <Cell><Fit w={83} size={41} color={C.grey}>今开</Fit><Fit w={105} size={43} color={C.green}>13.71</Fit></Cell>
          <Cell>
            <Row $gap={1}><Fit w={83} size={41} color={C.grey}>换手</Fit><Dots /></Row>
            <Fit w={113} size={43}>7.04%</Fit>
          </Cell>
          <Cell><Fit w={83} size={41} color={C.grey}>流值</Fit><Fit w={147} size={43}>136.2亿</Fit></Cell>
        </QuoteCol>
        <QuoteCol>
          <Cell><Fit w={83} size={41} color={C.grey}>最高</Fit><Fit w={104} size={43} color={C.red}>14.87</Fit></Cell>
          <Cell><Fit w={83} size={41} color={C.grey}>总手</Fit><Fit w={148} size={43}>65.40万</Fit></Cell>
          <Cell>
            <Row>
              <Fit w={83} size={41} color={C.grey}>市盈</Fit>
              <Sup><Fit w={22} size={22} color={C.grey}>动</Fit></Sup>
              <Dots />
            </Row>
            <Fit w={92} size={38}>33.31</Fit>
          </Cell>
        </QuoteCol>
        <QuoteCol>
          <Cell><Fit w={83} size={41} color={C.grey}>最低</Fit><Fit w={105} size={43} color={C.green}>13.40</Fit></Cell>
          <Cell><Fit w={83} size={41} color={C.grey}>金额</Fit><Fit w={123} size={43}>9.19亿</Fit></Cell>
          <Cell><MoreButton><Fit w={70} size={35}>更多</Fit></MoreButton></Cell>
        </QuoteCol>
      </Quote>

      <PeriodTabs>
        {periods.map(([t, w], i) => (
          <PeriodTab key={t} $active={i === 2}><Fit w={w} size={43} color={i === 2 ? C.orange : C.grey}>{t}</Fit></PeriodTab>
        ))}
        <PeriodTab $pr={2}><Fit w={87} size={43} color={C.grey}>更多</Fit><Tri /></PeriodTab>
        <PeriodTab $pt={1} $pr={24}><GearIcon /></PeriodTab>
      </PeriodTabs>

      <Legend $h={102} $pb={2}>
        <Chip $w={108}><Fit w={70} size={35}>均线</Fit><Tri /></Chip>
        <MaGrid>
          <Val w={154} size={34} color={C.ink}>MA5:13.89</Val>
          <Val w={122} size={34} color={C.amber}>10:12.69</Val>
          <Val w={123} size={34} color={C.magenta}>20:11.83</Val>
          <Val w={123} size={34} color={C.grey}>60:10.96</Val>
        </MaGrid>
        <Chip $w={127} $ml={50} $pl={10} $pr={4}>
          <Fit w={87} size={36}>DK点</Fit>
          <Corner><svg width="12" height="12" viewBox="0 0 12 12"><path d="M12 0V12H0Z" fill="#222" /></svg></Corner>
        </Chip>
        <Chip $w={133} $ml={39} $pl={10}><Fit w={107} size={35}>前复权</Fit></Chip>
      </Legend>
      <KChart />

      <Legend $h={64}>
        <Chip $w={146} $pl={4}><Fit w={102} size={37}>MACD</Fit><Tri /></Chip>
        <Val w={144} ml={3} color={C.ink}>DIF:0.81</Val>
        <Val w={160} ml={21} color={C.yellow}>DEA:0.47</Val>
        <Val w={118} ml={22} color={C.purple}>M:0.69</Val>
        <SideHandle>
          <svg width="16" height="30" viewBox="0 0 16 30"><path d="M14 2L2.500 15L14 28" fill="none" stroke="#fff" strokeWidth="3.500" /></svg>
        </SideHandle>
      </Legend>
      <MacdChart />

      <Legend $h={64}>
        <Chip $w={151} $pl={4}><Fit w={107} size={35}>成交量</Fit><Tri /></Chip>
        <Val thin w={80} ml={5} size={37} color={C.ink} down>65.31万</Val>
        <Val thin w={133} ml={9} size={37} color={C.yellow} down>MA1:94.64万</Val>
        <Val thin w={134} ml={11} size={37} color={C.purple}>MA2:68.61万</Val>
        <Val thin w={134} ml={9} size={37} color={C.green}>MA3:46.75万</Val>
        <Fit w={195} ml={9} size={36} color={C.light}>虚拟成交量:88.16万</Fit>
      </Legend>
      <VolumeChart />

      <Legend $h={65}>
        <Chip $w={108} $pl={4}><Fit w={65} size={37}>KDJ</Fit><Tri /></Chip>
        <Val w={134} ml={3} color={C.ink}>K:89.20</Val>
        <Val w={137} ml={20} color={C.yellow}>D:82.24</Val>
        <Val w={149} ml={15} color={C.purple}>J:103.12</Val>
      </Legend>
      <KdjChart />
      <Axis><AxisChart /></Axis>

      <Banner>
        <HornIcon />
        <Fit w={662} ml={53} size={39} color={C.orange}>看好创新成长赛道，就选创业板指数！</Fit>
        <Divider />
        <Row $mr={22}><CloseIcon /></Row>
      </Banner>

      <SectionTabs>
        {sections.map((t, i) => (
          <PeriodTab key={t} $active={i === 0} $pt={3}><Fit w={88} size={43} weight={i === 0 ? 500 : 400} color={i === 0 ? C.orange : C.grey}>{t}</Fit></PeriodTab>
        ))}
      </SectionTabs>
      <Strips><Strip /><Strip /></Strips>

      <BottomNav>
        <IndexBox>
          <Row $ml={87}><Tri w={21} h={8} color="#808080" up /></Row>
          <Row $mt={13}><Fit w={142} ml={28} size={40} weight={500} color={C.green}>4004.99</Fit></Row>
          <Row $mt={5}>
            <Fit w={71} size={34} color={C.grey}>上证</Fit>
            <Fit w={118} ml={44} size={38} color={C.green}>−0.07%</Fit>
          </Row>
        </IndexBox>
        <NavItem><TradeIcon /><Fit w={68} size={34} color={C.grey}>交易</Fit></NavItem>
        <NavItem><PostIcon /><Fit w={70} size={34} color={C.grey}>发帖</Fit></NavItem>
        <NavItem><AppsIcon /><Fit w={70} size={34} color={C.grey}>功能</Fit></NavItem>
        <NavItem><MoreIcon /><Fit w={106} size={34} color={C.grey}>设自选</Fit></NavItem>
      </BottomNav>
    </Page>
  );
}
